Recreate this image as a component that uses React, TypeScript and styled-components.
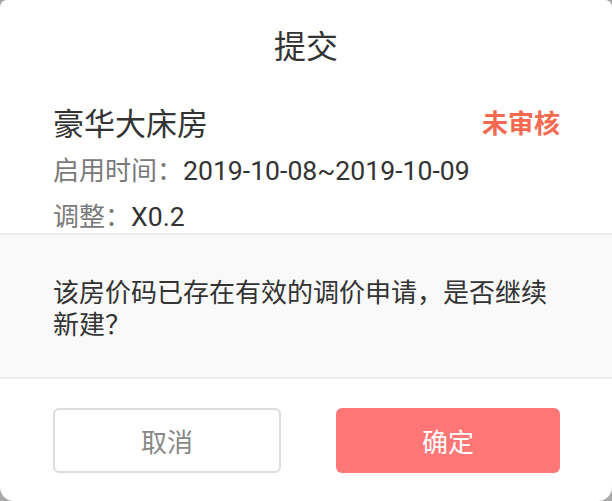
import React from "react";
import styled, { createGlobalStyle } from "styled-components";

const GlobalStyle = createGlobalStyle`
  html, body {
    margin: 0;
    padding: 0;
    background: #a8a8a8;
  }
  body {
    font-family: Roboto, "Noto Sans CJK SC", "Noto Sans", sans-serif;
  }
  * { box-sizing: border-box; }
`;

const Card = styled.div`
  width: 612px;
  height: 501px;
  background: #ffffff;
  border-radius: 7px 7px 14px 14px;
  overflow: hidden;
  display: flex;
  flex-direction: column;
`;

const Title = styled.div`
  height: 94px;
  line-height: 94px;
  text-align: center;
  font-size: 32px;
  color: #333333;
`;

const InfoBlock = styled.div`
  height: 139px;
  overflow: hidden;
  padding: 0 52px 0 53px;
`;

const RoomRow = styled.div`
  display: flex;
  justify-content: space-between;
  align-items: center;
  height: 54px;
`;

const RoomName = styled.span`
  font-size: 31px;
  color: #333333;
`;

const Status = styled.span`
  font-size: 26px;
  font-weight: 700;
  color: #f46a50;
`;

const InfoLine = styled.div`
  height: 46px;
  line-height: 46px;
  font-size: 26px;
  white-space: nowrap;
`;

const Label = styled.span`
  color: #7a7a7a;
`;

const Value = styled.span`
  color: #333333;
  font-size: 26.6px;
`;

const Message = styled.div`
  border-top: 2px solid #ededed;
  border-bottom: 2px solid #ededed;
  background: #f9f9f9;
  padding: 42px 53px 36px;
  font-size: 26px;
  line-height: 32px;
  color: #333333;
`;

const Footer = styled.div`
  display: flex;
  justify-content: space-between;
  padding: 29px 52px 0 53px;
`;

const Button = styled.button<{ $primary?: boolean }>`
  width: ${(p) => (p.$primary ? "224px" : "228px")};
  height: 65px;
  border-radius: 6px;
  font-family: Roboto, "Noto Sans CJK SC", sans-serif;
  font-size: 26px;
  cursor: pointer;
  border: ${(p) => (p.$primary ? "none" : "2px solid #dddddd")};
  background: ${(p) => (p.$primary ? "#ff7676" : "#ffffff")};
  color: ${(p) => (p.$primary ? "#ffffff" : "#888888")};
`;

export default function App() {
  return (
    <>
      <GlobalStyle />
      <Card>
        <Title>提交</Title>
        <InfoBlock>
          <RoomRow>
            <RoomName>豪华大床房</RoomName>
            <Status>未审核</Status>
          </RoomRow>
          <InfoLine>
            <Label>启用时间：</Label>
            <Value>2019-10-08~2019-10-09</Value>
          </InfoLine>
          <InfoLine>
            <Label>调整：</Label>
            <Value>X0.2</Value>
          </InfoLine>
        </InfoBlock>
        <Message>该房价码已存在有效的调价申请，是否继续新建？</Message>
        <Footer>
          <Button>取消</Button>
          <Button $primary>确定</Button>
        </Footer>
      </Card>
    </>
  );
}
